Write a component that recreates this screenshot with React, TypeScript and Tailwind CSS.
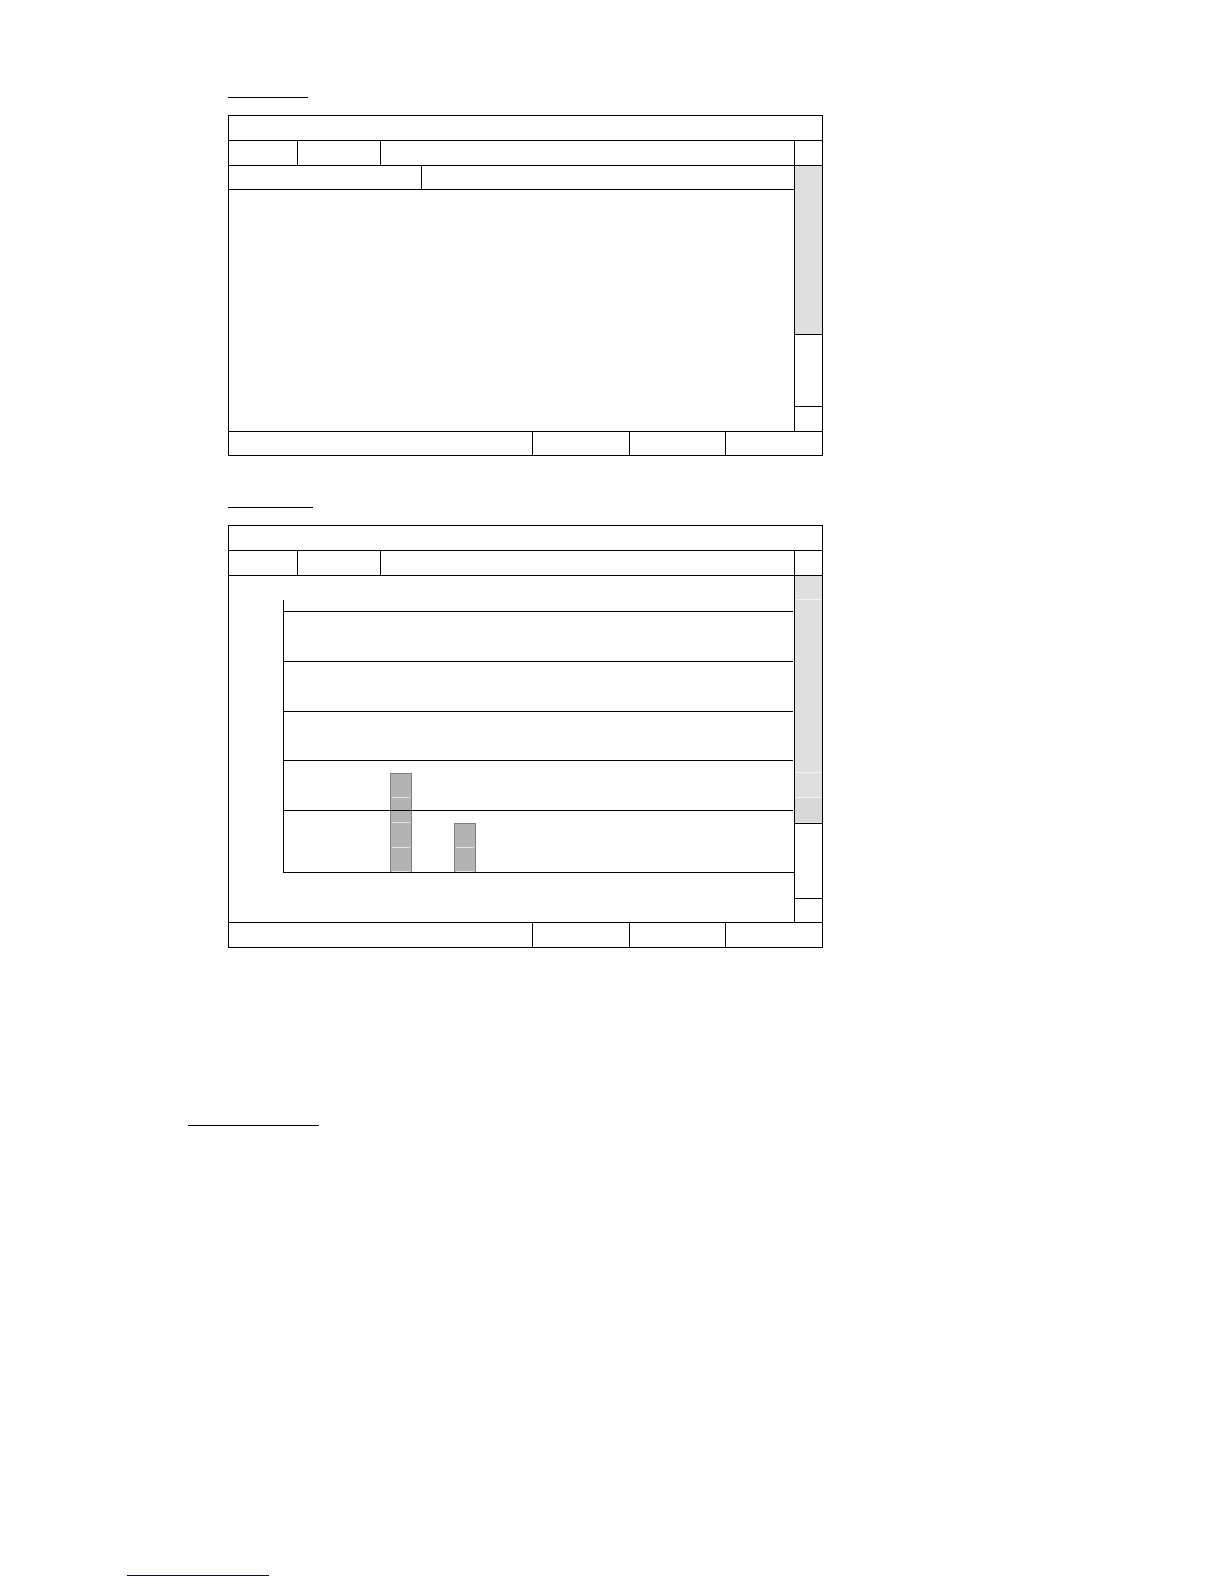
import React from "react";
import clsx from "clsx";

const HEADER = "flex h-[25px] border-b border-black";

interface ScrollBarProps {
  track: React.ReactNode;
  thumbClass: string;
  buttonClass: string;
}

const ScrollBar: React.FC<ScrollBarProps> = ({ track, thumbClass, buttonClass }) => (
  <div className="w-7 shrink-0 border-l border-black flex flex-col">
    <div className="flex-1 bg-[#dfdfdf]">{track}</div>
    <div className={clsx("border-t border-black", thumbClass)} />
    <button
      type="button"
      aria-label="Scroll down"
      className={clsx("block w-full border-t border-black", buttonClass)}
    />
  </div>
);

interface FrameProps {
  bodyClass: string;
  footerClass: string;
  scrollBar: React.ReactNode;
  children: React.ReactNode;
}

const Frame: React.FC<FrameProps> = ({ bodyClass, footerClass, scrollBar, children }) => (
  <div className="mt-[17px] w-full max-w-[595px] border border-black">
    <div className={HEADER} />
    <div className={HEADER}>
      <button type="button" aria-label="First tab" className="w-[69px] border-r border-black" />
      <button type="button" aria-label="Second tab" className="w-[83px] border-r border-black" />
      <div className="flex-1" />
      <button type="button" aria-label="Scroll up" className="w-7 border-l border-black" />
    </div>
    <div className={clsx("flex border-b border-black", bodyClass)}>
      <div className="flex-1 min-w-0">{children}</div>
      {scrollBar}
    </div>
    <div className={clsx("flex", footerClass)}>
      <div className="flex-1" />
      <button type="button" aria-label="First action" className="w-[97px] border-l border-black" />
      <button type="button" aria-label="Second action" className="w-24 border-l border-black" />
      <button type="button" aria-label="Third action" className="w-[97px] border-l border-black" />
    </div>
  </div>
);

const gridRows = ["h-3", "h-[50px]", "h-[50px]", "h-[49px]", "h-[50px]"];

const bars = [
  ["h-6", "h-[25px]", "h-[25px]", "h-6"],
  ["h-6", "h-6"],
];

const Chart: React.FC = () => (
  <div className="mt-6 ml-[54px] h-[273px] grid border-l border-b border-black">
    <div className="col-start-1 row-start-1 flex items-end gap-[42px] pl-[106px]">
      {bars.map((segments, index) => (
        <div
          key={index}
          className="w-[22px] border-t border-x border-[#808080] bg-[#b3b3b3] px-px"
        >
          {segments.map((height, i) => (
            <div key={i} className={clsx("border-b border-[#e2e2e2]", height)} />
          ))}
        </div>
      ))}
    </div>
    {/* grid lines run over the bars */}
    <div className="col-start-1 row-start-1 mr-px">
      {gridRows.map((height, index) => (
        <div key={index} className={clsx("border-b border-black", height)} />
      ))}
    </div>
  </div>
);

const ChartTrack: React.FC = () => (
  <div className="h-full flex flex-col">
    <div className="h-6 mx-px border-b border-[#f4f4f4]" />
    <div className="h-[173px] mx-px border-b border-[#f4f4f4]" />
    <div className="h-[25px] mx-px border-b border-[#f4f4f4]" />
    <div className="flex-1 bg-[#d8d8d8] border-b border-[#e8e8e8]" />
  </div>
);

export default function App() {
  return (
    <main className="bg-white pt-[73px] pb-2 pl-[127px] pr-8">
      <section className="ml-[101px]">
        <div className="w-20 h-[25px] border-b border-black" />
        <Frame
          bodyClass="h-[266px]"
          footerClass="h-[23px]"
          scrollBar={<ScrollBar track={null} thumbClass="h-[72px]" buttonClass="h-[25px]" />}
        >
          <div className="h-6 border-b border-black flex">
            <div className="w-[193px] border-r border-black" />
          </div>
        </Frame>
      </section>

      <section className="ml-[101px] mt-[27px]">
        <div className="w-[85px] h-[25px] border-b border-black" />
        <Frame
          bodyClass="h-[347px]"
          footerClass="h-6"
          scrollBar={
            <ScrollBar track={<ChartTrack />} thumbClass="h-[75px]" buttonClass="h-6" />
          }
        >
          <div className="flow-root">
            <Chart />
          </div>
        </Frame>
      </section>

      <section className="ml-[61px] mt-[153px]">
        <div className="w-[131px] h-[25px] border-b border-black" />
      </section>

      <footer className="mt-[425px]">
        <a
          href="#"
          aria-label="Website"
          className="block w-[142px] h-[25px] border-b border-[#000080]"
        />
      </footer>
    </main>
  );
}
